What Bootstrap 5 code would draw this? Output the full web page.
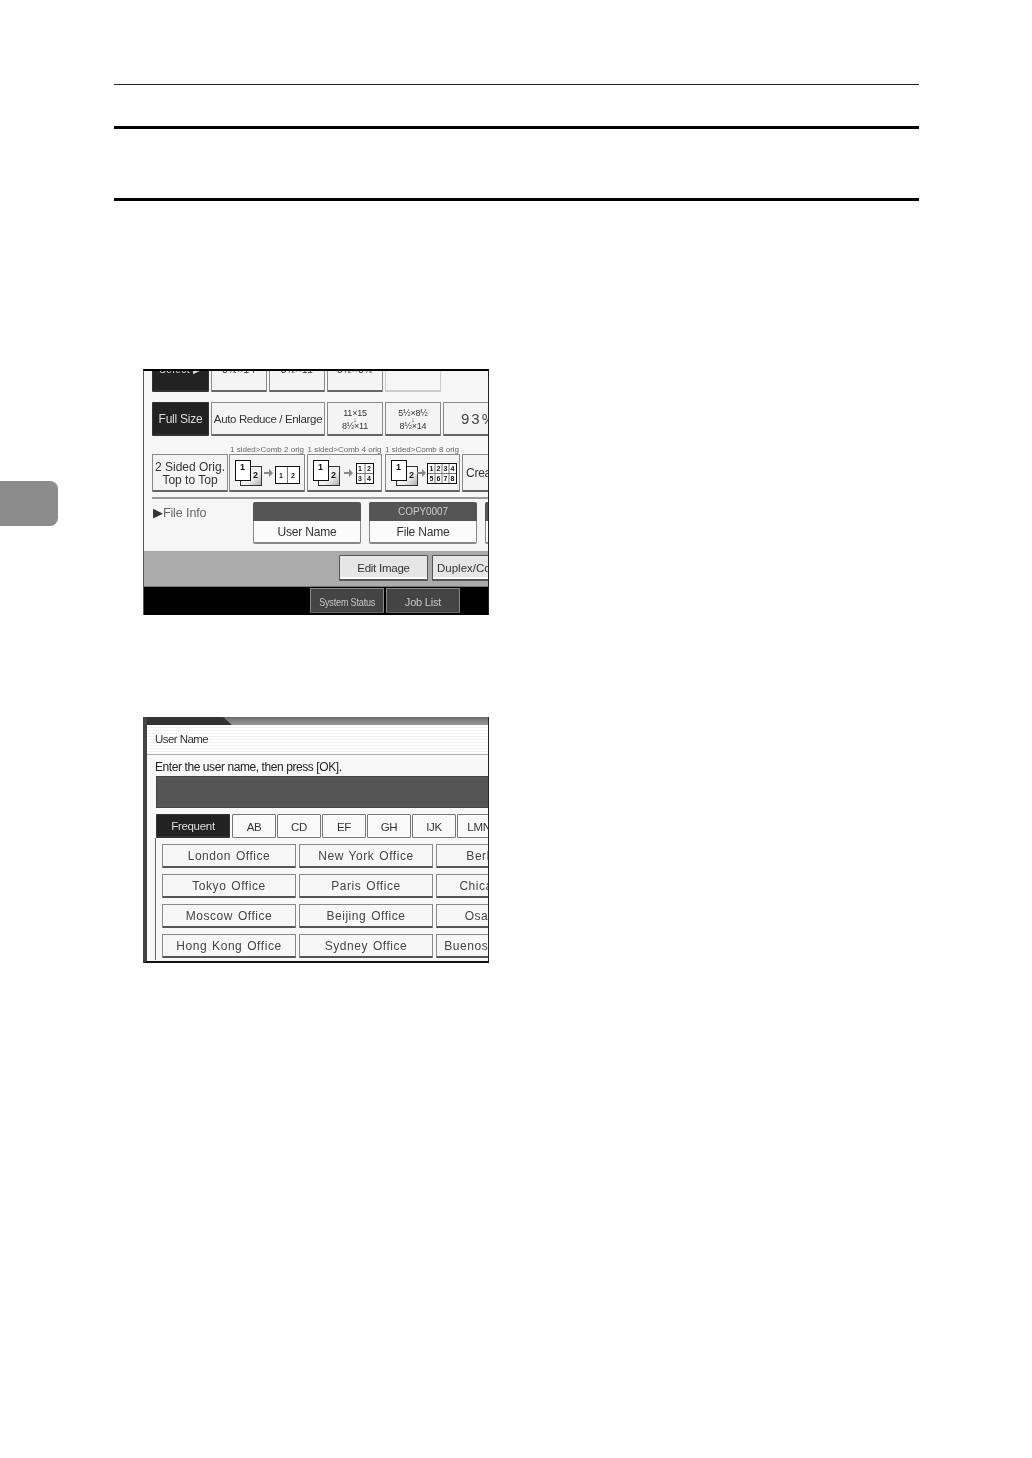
<!DOCTYPE html>
<html lang="en">
<head>
<meta charset="utf-8">
<title>Manual page</title>
<link href="https://cdn.jsdelivr.net/npm/bootstrap@5.3.0/dist/css/bootstrap.min.css" rel="stylesheet">
<style>
body{background:#fff;margin:0;font-family:"Liberation Sans",Arial,sans-serif;color:#222}
.sheet{height:1458px;overflow:hidden}
.side-col{width:114px}
.thumb-tab{width:58px;height:45px;margin-top:481px;background:#8c8c8c;border-radius:0 8px 8px 0}
.main-col{width:805px}
.rule-thin{height:1px;margin-top:84px;background:#222}
.rule-thick{height:3px;background:#000}
.rule-a{margin-top:41px}
.rule-b{margin-top:69px}
.shot{width:346px;height:246px;margin-left:29px;overflow:hidden;filter:blur(.45px);font-family:"Liberation Sans",Arial,sans-serif}
.shot-a{margin-top:168px;background:#f6f6f6;border-top:2px solid #000;border-left:1px solid #555;border-right:1px solid #222}
.shot-b{margin-top:102px;background:#f8f8f8;border-left:4px solid #444;border-right:1px solid #222;border-bottom:2px solid #111}
.keyb{padding:1px 0 0;flex-shrink:0;border:1px solid #8a8a8a;border-bottom:2px solid #666;border-radius:1px;background:#f4f4f4;color:#333;font-size:12px;line-height:1.1;letter-spacing:-.25px;--bs-btn-hover-bg:#f4f4f4;--bs-btn-hover-border-color:#8a8a8a;--bs-btn-hover-color:#333}
.keyb-dark{background:#222;border-color:#333;color:#ddd}
.keyb-faint{background:#f6f6f6;border-color:#ccc;border-bottom-color:#ccc}
.rowa1{height:21px;padding-left:8px;gap:2px}
.rowa1 .keyb{height:37px;width:56px;padding:0 0 8px;font-size:10px;letter-spacing:.5px}
.rowa1 .keyb-first{width:57px}
.rowa2{height:34px;margin-top:10px;padding-left:8px;gap:2px}
.rowa2 .keyb{height:34px;width:56px;padding-top:2px}
.rowa2 .keyb-first{width:57px}
.rowa2 .keyb-wide{width:114px;white-space:nowrap;font-size:11.5px;letter-spacing:-.35px}
.rowa2 .keyb-clip{width:60px;font-size:15px;text-align:left;padding-left:17px;letter-spacing:2px;color:#444}
.size-text{font-size:9px;line-height:9px;letter-spacing:-.2px;color:#333}
.size-arrow{font-size:7px;line-height:4px;display:block}
.lab-row{height:10px;margin-top:8px;padding-left:86px}
.lab-item{width:77.5px;flex-shrink:0;padding-top:1px;font-size:8px;line-height:10px;color:#666;white-space:nowrap}
.rowa3{height:38px;padding-left:8px;gap:2px}
.rowa3 .keyb{height:38px;width:75px;padding-top:3px}
.rowa3 .keyb-first{width:76px;margin-right:-1px;letter-spacing:0}
.rowa3 .keyb-second{width:76px}
.rowa3 .keyb-third{margin-left:1px}
.rowa3 .keyb-clip{width:60px;text-align:left;padding-left:3px}
.rowa3 .keyb-icon{padding-top:0}
.rowa3 svg{display:block}
.glyph-num{font:bold 9px "Liberation Sans",sans-serif;fill:#111}
.glyph-small{font:bold 7px "Liberation Sans",sans-serif;fill:#111}
.sep-line{height:2px;margin:5px 0 0 8px;background:#999}
.info-row{height:42px;margin-top:3px;padding-left:9px}
.info-label{width:100px;flex-shrink:0;font-size:12.5px;color:#666;padding-top:2px;letter-spacing:-.1px}
.info-mark{color:#333}
.field-box{width:108px;flex-shrink:0;margin-right:8px}
.field-top{height:19px;background:#555;color:#ccc;border-radius:2px 2px 0 0;font-size:10px;line-height:19px;letter-spacing:-.1px}
.field-bot{height:23px;background:#fbfbfb;border:1px solid #888;border-top:0;border-bottom-width:2px;border-radius:0 0 2px 2px;font-size:12px;line-height:23px;color:#333;letter-spacing:-.2px}
.band-grey{height:37px;margin-top:6px;padding:4px 0 0 195px;gap:4px;background:#ababab;border-top:1px solid #eee;border-bottom:1px solid #777}
.band-grey .keyb{height:26px;width:89px;padding-top:2px;font-size:11.5px;background:#e6e6e6;border-color:#555;box-shadow:inset 0 -2px 0 #fff}
.band-grey .keyb-clip{width:72px;text-align:left;padding-left:4px;white-space:nowrap;letter-spacing:0}
.band-black{height:29px;background:#000;padding:1px 0 0 166px;gap:2px}
.band-black .keyb{height:25px;width:74px;padding-top:4px;background:#444;border:1px solid #888;border-bottom-color:#666;color:#c8c8c8;font-size:11px;letter-spacing:-.2px}
.squeeze-text{display:inline-block;white-space:nowrap;transform:scaleX(.82)}
.top-strip{height:8px;background:linear-gradient(#6c6c6c,#9a9a9a)}
.top-notch{width:85px;height:8px;background:#333;clip-path:polygon(0 0,76px 0,100% 100%,0 100%)}
.title-strip{height:30px;padding-left:8px;font-size:11.500px;letter-spacing:-.55px;background:repeating-linear-gradient(#fff 0 2px,#f1f1f1 2px 3px);border-bottom:1px solid #aaa;color:#333}
.prompt-line{height:21px;padding:5px 0 0 8px;font-size:12px;line-height:15px;letter-spacing:-.42px;color:#222}
.dark-input{height:32px;margin-left:9px;background:#555;border:1px solid #444;border-right:0}
.tab-row{height:24px;margin-top:6px;padding-left:9px;gap:1px}
.tab-row .keyb{height:24px;width:44px;padding-top:2px;font-size:11.5px;letter-spacing:-.3px;background:#fafafa;border-color:#777;border-bottom-width:1px}
.tab-row .keyb-first{width:74px;margin-right:1px;background:#222;color:#ddd;border-color:#333;border-bottom-width:2px}
.key-area{margin-left:8px;height:122px;padding:6px 0 0 6px;gap:6px;border-left:1px solid #666}
.key-line{gap:3px}
.key-line .keyb{width:134px;height:24px;padding-top:2px;font-size:12px;letter-spacing:.55px;word-spacing:1px;white-space:nowrap;background:#f7f7f7;color:#444;border-color:#888;border-bottom-color:#555}
</style>
</head>
<body>
<svg width="0" height="0" class="position-absolute">
  <defs>
    <linearGradient id="shade" x1="0" y1="0" x2="1" y2="1"><stop offset="0" stop-color="#fff"/><stop offset=".6" stop-color="#f0f0f0"/><stop offset="1" stop-color="#aaa"/></linearGradient>
    <g id="stack">
      <rect x="10.5" y="11.5" width="21" height="19" fill="url(#shade)" stroke="#333"/>
      <rect x="5.5" y="5.5" width="15" height="20" fill="#fff" stroke="#111"/>
      <text class="glyph-num" x="10" y="15">1</text>
      <text class="glyph-num" x="23" y="23">2</text>
    </g>
    <path id="arrow" d="M0 17h5v-3l4 4-4 4v-3h-5z" fill="#888"/>
  </defs>
</svg>
<div class="sheet d-flex">
  <div class="side-col flex-shrink-0"><div class="thumb-tab"></div></div>
  <div class="main-col flex-shrink-0">
    <div class="rule-thin"></div>
    <div class="rule-thick rule-a"></div>
    <div class="rule-thick rule-b"></div>

    <div class="shot shot-a">
      <div class="rowa1 d-flex align-items-end overflow-hidden">
        <button class="btn keyb keyb-dark keyb-first">Select ▶</button>
        <button class="btn keyb">8½×14</button>
        <button class="btn keyb">8½×11</button>
        <button class="btn keyb">5½×8½</button>
        <button class="btn keyb keyb-faint"></button>
      </div>
      <div class="rowa2 d-flex">
        <button class="btn keyb keyb-dark keyb-first">Full Size</button>
        <button class="btn keyb keyb-wide">Auto Reduce / Enlarge</button>
        <button class="btn keyb"><span class="size-text d-block">11×15<span class="size-arrow">↓</span>8½×11</span></button>
        <button class="btn keyb"><span class="size-text d-block">5½×8½<span class="size-arrow">↓</span>8½×14</span></button>
        <button class="btn keyb keyb-clip">93%</button>
      </div>
      <div class="lab-row d-flex">
        <div class="lab-item">1 sided&gt;Comb 2 orig</div>
        <div class="lab-item">1 sided&gt;Comb 4 orig</div>
        <div class="lab-item">1 sided&gt;Comb 8 orig</div>
      </div>
      <div class="rowa3 d-flex">
        <button class="btn keyb keyb-first">2 Sided Orig.<br>Top to Top</button>
        <button class="btn keyb keyb-second keyb-icon">
          <svg width="74" height="35" viewBox="0 0 74 35">
            <use href="#stack"/><use href="#arrow" x="34" y="0"/>
            <rect x="45.5" y="11.5" width="24" height="17" fill="#fff" stroke="#111"/>
            <path d="M57.5 12v16" stroke="#777"/>
            <text class="glyph-small" x="49" y="23">1</text><text class="glyph-small" x="61" y="23">2</text>
          </svg>
        </button>
        <button class="btn keyb keyb-icon">
          <svg width="73" height="35" viewBox="0 0 73 35">
            <use href="#stack"/><use href="#arrow" x="36" y="0"/>
            <rect x="48.5" y="8.5" width="17" height="20" fill="#fff" stroke="#111"/>
            <path d="M57 9v19M49 18.500h16" stroke="#777"/>
            <text class="glyph-small" x="50" y="16">1</text><text class="glyph-small" x="59" y="16">2</text>
            <text class="glyph-small" x="50" y="26">3</text><text class="glyph-small" x="59" y="26">4</text>
          </svg>
        </button>
        <button class="btn keyb keyb-third keyb-icon">
          <svg width="73" height="35" viewBox="0 0 73 35">
            <use href="#stack"/><use href="#arrow" x="31" y="0"/>
            <rect x="41.500" y="8.500" width="29" height="20" fill="#fff" stroke="#111"/>
            <path d="M49 9v19M56 9v19M63 9v19M42 18.500h28" stroke="#777"/>
            <text class="glyph-small" x="43.500" y="16">1</text><text class="glyph-small" x="50.500" y="16">2</text><text class="glyph-small" x="57.500" y="16">3</text><text class="glyph-small" x="64.500" y="16">4</text>
            <text class="glyph-small" x="43.500" y="26">5</text><text class="glyph-small" x="50.500" y="26">6</text><text class="glyph-small" x="57.500" y="26">7</text><text class="glyph-small" x="64.500" y="26">8</text>
          </svg>
        </button>
        <button class="btn keyb keyb-clip">Create</button>
      </div>
      <div class="sep-line"></div>
      <div class="info-row d-flex">
        <div class="info-label"><span class="info-mark">▶</span>File Info</div>
        <div class="field-box text-center"><div class="field-top"></div><div class="field-bot">User Name</div></div>
        <div class="field-box text-center"><div class="field-top">COPY0007</div><div class="field-bot">File Name</div></div>
        <div class="field-box text-center"><div class="field-top"></div><div class="field-bot"></div></div>
      </div>
      <div class="band-grey d-flex">
        <button class="btn keyb">Edit Image</button>
        <button class="btn keyb keyb-clip">Duplex/Combine</button>
      </div>
      <div class="band-black d-flex">
        <button class="btn keyb"><span class="squeeze-text">System Status</span></button>
        <button class="btn keyb">Job List</button>
      </div>
    </div>

    <div class="shot shot-b">
      <div class="top-strip"><div class="top-notch"></div></div>
      <div class="title-strip d-flex align-items-center">User Name</div>
      <div class="prompt-line">Enter the user name, then press [OK].</div>
      <div class="dark-input"></div>
      <div class="tab-row d-flex">
        <button class="btn keyb keyb-first">Frequent</button>
        <button class="btn keyb">AB</button>
        <button class="btn keyb">CD</button>
        <button class="btn keyb">EF</button>
        <button class="btn keyb">GH</button>
        <button class="btn keyb">IJK</button>
        <button class="btn keyb">LMN</button>
      </div>
      <div class="key-area d-flex flex-column">
        <div class="key-line d-flex"><button class="btn keyb">London Office</button><button class="btn keyb">New York Office</button><button class="btn keyb">Berlin Office</button></div>
        <div class="key-line d-flex"><button class="btn keyb">Tokyo Office</button><button class="btn keyb">Paris Office</button><button class="btn keyb">Chicago Office</button></div>
        <div class="key-line d-flex"><button class="btn keyb">Moscow Office</button><button class="btn keyb">Beijing Office</button><button class="btn keyb">Osaka Office</button></div>
        <div class="key-line d-flex"><button class="btn keyb">Hong Kong Office</button><button class="btn keyb">Sydney Office</button><button class="btn keyb">Buenos Aires Office</button></div>
      </div>
    </div>
  </div>
</div>
<script src="https://cdn.jsdelivr.net/npm/bootstrap@5.3.0/dist/js/bootstrap.bundle.min.js"></script>
</body>
</html>
